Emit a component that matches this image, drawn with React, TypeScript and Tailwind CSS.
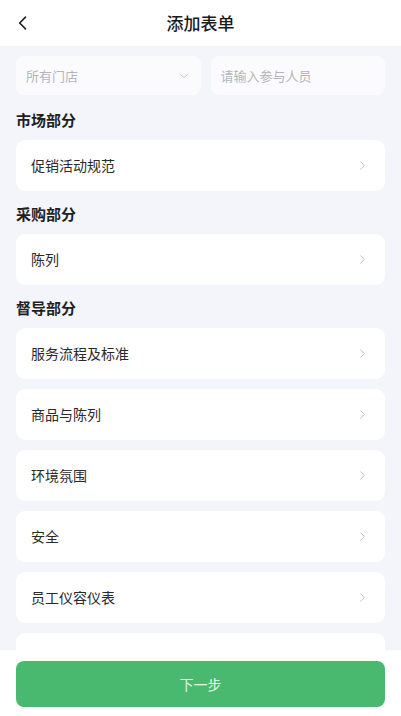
import React from 'react';

const sections = [
    { title: '市场部分', items: ['促销活动规范'] },
    { title: '采购部分', items: ['陈列'] },
    { title: '督导部分', items: ['服务流程及标准', '商品与陈列', '环境氛围', '安全', '员工仪容仪表', ''] },
];

const Chevron = ({ dir = 'right', className = '' }: { dir?: 'right' | 'left' | 'down'; className?: string }) => {
    const d = dir === 'right' ? 'M9 6l6 6-6 6' : dir === 'left' ? 'M15 5l-7 7 7 7' : 'M6 9l6 6 6-6';
    return (
        <svg viewBox="0 0 24 24" fill="none" stroke="currentColor" strokeLinecap="round" strokeLinejoin="round" className={className}>
            <path d={d} />
        </svg>
    );
};

export default function App() {
    return (
        <div
            className="h-[716px] w-[401px] flex flex-col bg-[#f4f5fb] overflow-hidden"
            style={{ fontFamily: '"Noto Sans CJK SC", "Noto Sans", sans-serif' }}
        >
            {/* Header */}
            <div className="h-[46px] flex-none bg-white flex items-center relative">
                <Chevron dir="left" className="w-[20px] h-[20px] text-[#222] ml-[13px] stroke-[2]" />
                <div className="absolute inset-x-0 text-center text-[17px] font-medium text-[#1a1a1a] pointer-events-none">
                    添加表单
                </div>
            </div>

            <div className="flex-1 overflow-hidden px-[16px]">
                {/* Filters */}
                <div className="flex gap-[10px] mt-[10px]">
                    <div className="flex-1 h-[39px] rounded-[8px] bg-[#fbfbfe] flex items-center justify-between pl-[10px] pr-[10px]">
                        <span className="text-[13px] text-[#b3b5bd]">所有门店</span>
                        <Chevron dir="down" className="w-[14px] h-[14px] text-[#b8bac2] stroke-[1.6]" />
                    </div>
                    <div className="flex-1 h-[39px] rounded-[8px] bg-[#fbfbfe] flex items-center pl-[10px]">
                        <span className="text-[13px] text-[#b3b5bd]">请输入参与人员</span>
                    </div>
                </div>

                {sections.map((s, i) => (
                    <div key={s.title} className={i === 0 ? 'mt-[15px]' : 'mt-[13px]'}>
                        <div className="h-[21px] flex items-center text-[15px] font-bold text-[#1f1f1f] mb-[9px]">
                            {s.title}
                        </div>
                        <div className="flex flex-col gap-[10px]">
                            {s.items.map((it, j) => (
                                <div key={j} className="h-[51px] flex-none rounded-[9px] bg-white flex items-center justify-between pl-[15px] pr-[15px]">
                                    <span className="text-[14px] text-[#2a2a2a]">{it}</span>
                                    <Chevron className="w-[15px] h-[15px] text-[#b9bbc2] stroke-[1.5]" />
                                </div>
                            ))}
                        </div>
                    </div>
                ))}
            </div>

            {/* Bottom bar */}
            <div className="flex-none h-[66px] bg-white px-[16px] pt-[11px]">
                <button className="w-full h-[46px] rounded-[8px] bg-[#48b96f] text-[14px] text-[#e8f6ec]">
                    下一步
                </button>
            </div>
        </div>
    );
}
